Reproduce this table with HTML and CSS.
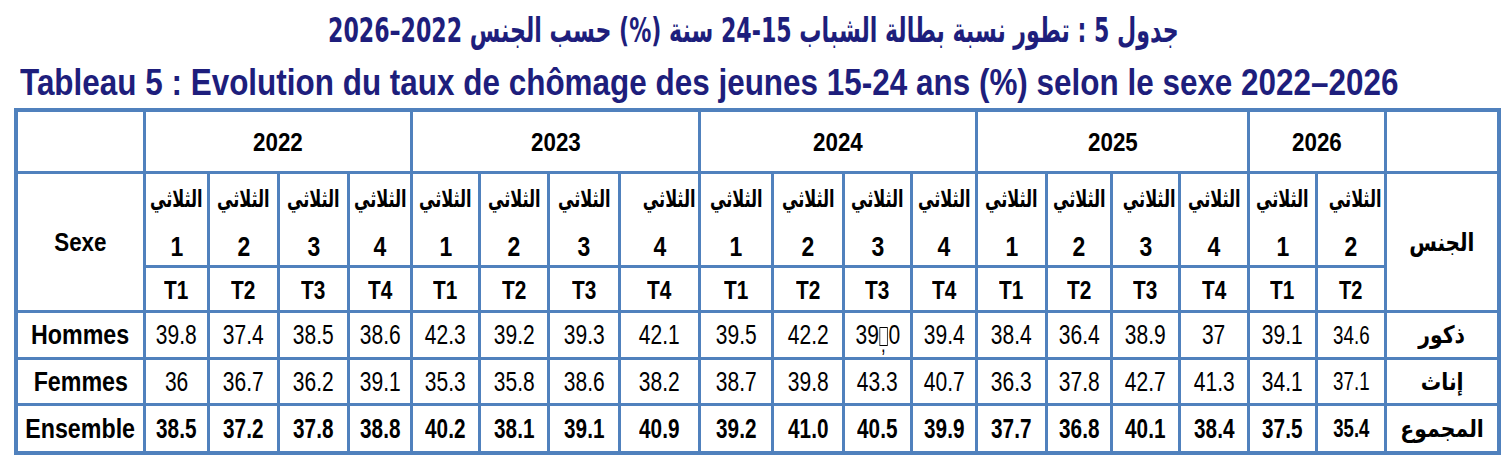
FILE: index.html
```html
<!DOCTYPE html>
<html lang="fr">
<head>
<meta charset="utf-8">
<title>Tableau 5</title>
<link rel="stylesheet" href="styles.css">
</head>
<body>
<div class="page">
  <div class="title-ar"><h1 class="x" dir="rtl" lang="ar">جدول 5 : تطور نسبة بطالة الشباب 15-24 سنة (%) حسب الجنس 2022–2026</h1></div>
  <div class="title-fr"><h2 class="x">Tableau 5 : Evolution du taux de chômage des jeunes 15-24 ans (%) selon le sexe 2022–2026</h2></div>
  <div class="grid">
    <div class="c"></div>
    <div class="c y s4"><span class="x">2022</span></div>
    <div class="c y s4"><span class="x">2023</span></div>
    <div class="c y s4"><span class="x">2024</span></div>
    <div class="c y s4"><span class="x">2025</span></div>
    <div class="c y s2"><span class="x">2026</span></div>
    <div class="c"></div>

    <div class="c sexe r2"><span class="x">Sexe</span></div>
    <div class="c q"><span class="ar"><span class="x">الثلاثي</span></span><span class="num"><span class="x">1</span></span></div>
    <div class="c q"><span class="ar"><span class="x">الثلاثي</span></span><span class="num"><span class="x">2</span></span></div>
    <div class="c q"><span class="ar"><span class="x">الثلاثي</span></span><span class="num"><span class="x">3</span></span></div>
    <div class="c q"><span class="ar"><span class="x">الثلاثي</span></span><span class="num"><span class="x">4</span></span></div>
    <div class="c q"><span class="ar"><span class="x">الثلاثي</span></span><span class="num"><span class="x">1</span></span></div>
    <div class="c q"><span class="ar"><span class="x">الثلاثي</span></span><span class="num"><span class="x">2</span></span></div>
    <div class="c q"><span class="ar"><span class="x">الثلاثي</span></span><span class="num"><span class="x">3</span></span></div>
    <div class="c q"><span class="ar right"><span class="x">الثلاثي</span></span><span class="num"><span class="x">4</span></span></div>
    <div class="c q"><span class="ar"><span class="x">الثلاثي</span></span><span class="num"><span class="x">1</span></span></div>
    <div class="c q"><span class="ar"><span class="x">الثلاثي</span></span><span class="num"><span class="x">2</span></span></div>
    <div class="c q"><span class="ar"><span class="x">الثلاثي</span></span><span class="num"><span class="x">3</span></span></div>
    <div class="c q"><span class="ar"><span class="x">الثلاثي</span></span><span class="num"><span class="x">4</span></span></div>
    <div class="c q"><span class="ar"><span class="x">الثلاثي</span></span><span class="num"><span class="x">1</span></span></div>
    <div class="c q"><span class="ar"><span class="x">الثلاثي</span></span><span class="num"><span class="x">2</span></span></div>
    <div class="c q"><span class="ar right"><span class="x">الثلاثي</span></span><span class="num"><span class="x">3</span></span></div>
    <div class="c q"><span class="ar"><span class="x">الثلاثي</span></span><span class="num"><span class="x">4</span></span></div>
    <div class="c q"><span class="ar"><span class="x">الثلاثي</span></span><span class="num"><span class="x">1</span></span></div>
    <div class="c q"><span class="ar right"><span class="x">الثلاثي</span></span><span class="num"><span class="x">2</span></span></div>
    <div class="c jins r2" lang="ar"><span class="x">الجنس</span></div>

    <div class="c t"><span class="x">T1</span></div><div class="c t"><span class="x">T2</span></div><div class="c t"><span class="x">T3</span></div><div class="c t"><span class="x">T4</span></div>
    <div class="c t"><span class="x">T1</span></div><div class="c t"><span class="x">T2</span></div><div class="c t"><span class="x">T3</span></div><div class="c t"><span class="x">T4</span></div>
    <div class="c t"><span class="x">T1</span></div><div class="c t"><span class="x">T2</span></div><div class="c t"><span class="x">T3</span></div><div class="c t"><span class="x">T4</span></div>
    <div class="c t"><span class="x">T1</span></div><div class="c t"><span class="x">T2</span></div><div class="c t"><span class="x">T3</span></div><div class="c t"><span class="x">T4</span></div>
    <div class="c t"><span class="x">T1</span></div><div class="c t sm"><span class="x">T2</span></div>

    <div class="c lab"><span class="x">Hommes</span></div>
    <div class="c n"><span class="x">39.8</span></div><div class="c n"><span class="x">37.4</span></div><div class="c n"><span class="x">38.5</span></div><div class="c n"><span class="x">38.6</span></div>
    <div class="c n"><span class="x">42.3</span></div><div class="c n"><span class="x">39.2</span></div><div class="c n"><span class="x">39.3</span></div><div class="c n"><span class="x">42.1</span></div>
    <div class="c n"><span class="x">39.5</span></div><div class="c n"><span class="x">42.2</span></div><div class="c n"><span class="x">39<span class="tofu"></span>0</span></div><div class="c n"><span class="x">39.4</span></div>
    <div class="c n"><span class="x">38.4</span></div><div class="c n"><span class="x">36.4</span></div><div class="c n"><span class="x">38.9</span></div><div class="c n"><span class="x">37</span></div>
    <div class="c n"><span class="x">39.1</span></div><div class="c n sm"><span class="x">34.6</span></div>
    <div class="c arow" lang="ar"><span class="x">ذكور</span></div>

    <div class="c lab"><span class="x">Femmes</span></div>
    <div class="c n"><span class="x">36</span></div><div class="c n"><span class="x">36.7</span></div><div class="c n"><span class="x">36.2</span></div><div class="c n"><span class="x">39.1</span></div>
    <div class="c n"><span class="x">35.3</span></div><div class="c n"><span class="x">35.8</span></div><div class="c n"><span class="x">38.6</span></div><div class="c n"><span class="x">38.2</span></div>
    <div class="c n"><span class="x">38.7</span></div><div class="c n"><span class="x">39.8</span></div><div class="c n"><span class="x">43.3</span></div><div class="c n"><span class="x">40.7</span></div>
    <div class="c n"><span class="x">36.3</span></div><div class="c n"><span class="x">37.8</span></div><div class="c n"><span class="x">42.7</span></div><div class="c n"><span class="x">41.3</span></div>
    <div class="c n"><span class="x">34.1</span></div><div class="c n sm"><span class="x">37.1</span></div>
    <div class="c arow" lang="ar"><span class="x">إناث</span></div>

    <div class="c lab"><span class="x">Ensemble</span></div>
    <div class="c n b"><span class="x">38.5</span></div><div class="c n b"><span class="x">37.2</span></div><div class="c n b"><span class="x">37.8</span></div><div class="c n b"><span class="x">38.8</span></div>
    <div class="c n b"><span class="x">40.2</span></div><div class="c n b"><span class="x">38.1</span></div><div class="c n b"><span class="x">39.1</span></div><div class="c n b"><span class="x">40.9</span></div>
    <div class="c n b"><span class="x">39.2</span></div><div class="c n b"><span class="x">41.0</span></div><div class="c n b"><span class="x">40.5</span></div><div class="c n b"><span class="x">39.9</span></div>
    <div class="c n b"><span class="x">37.7</span></div><div class="c n b"><span class="x">36.8</span></div><div class="c n b"><span class="x">40.1</span></div><div class="c n b"><span class="x">38.4</span></div>
    <div class="c n b"><span class="x">37.5</span></div><div class="c n b sm"><span class="x">35.4</span></div>
    <div class="c arow" lang="ar"><span class="x">المجموع</span></div>
  </div>
</div>
</body>
</html>
```

FILE: styles.css
```css
* { box-sizing: border-box; }
html, body { margin: 0; padding: 0; background: #ffffff; }
body {
  font-family: "Liberation Sans", "DejaVu Sans", sans-serif;
  color: #000;
}
.page { width: 1507px; height: 463px; overflow: hidden; }
.x {
  display: inline-block;
  flex: none;
  white-space: nowrap;
  transform: scaleX(var(--sx, 0.82));
}
.title-ar {
  height: 56px;
  padding-top: 7px;
  text-align: center;
  --sx: 0.65;
}
.title-ar h1 {
  margin: 0;
  font-family: "DejaVu Sans", sans-serif;
  font-size: 34px;
  line-height: 46px;
  font-weight: bold;
  color: #1e1e7c;
}
.title-fr {
  height: 52px;
  padding-left: 20px;
}
.title-fr h2 {
  margin: 0;
  font-size: 37px;
  line-height: 54px;
  font-weight: bold;
  color: #1e1e7c;
  transform-origin: left center;
  --sx: 0.85;
}
.grid {
  margin-left: 14px;
  width: 1487px;
  display: grid;
  grid-template-columns: 125px 61px 67px 67px 60px 65px 66px 68px 77px 70px 68px 65px 62px 67px 62px 65px 66px 65px 66px 110px;
  grid-template-rows: 59px 91px 42px 44px 43px 45px;
  gap: 3px;
  border: 4px solid #5081bd;
  background: #5081bd;
}
.c {
  background: #fff;
  display: flex;
  align-items: center;
  justify-content: center;
  white-space: nowrap;
  overflow: visible;
}
.y { font-size: 26px; font-weight: bold; --sx: 0.86; padding-top: 2px; }
.s4 { grid-column: span 4; }
.s2 { grid-column: span 2; }
.r2 { grid-row: span 2; }
.sexe { font-size: 26px; font-weight: bold; --sx: 0.86; }
.jins { font-family: "DejaVu Sans", sans-serif; font-size: 25px; font-weight: bold; --sx: 0.8; }
.q {
  flex-direction: column;
  align-items: stretch;
  justify-content: flex-start;
}
.q > span { display: flex; justify-content: center; }
.q .ar {
  font-family: "DejaVu Sans", sans-serif;
  font-size: 24px;
  font-weight: bold;
  height: 58px;
  line-height: 50px;
  --sx: 0.67;
}
.q .right { justify-content: flex-end; padding-right: 0; }
.q .right .x { transform-origin: 92% center; }
.q .num {
  font-size: 28px;
  font-weight: bold;
  line-height: 30px;
  --sx: 0.82;
}
.t { font-size: 26px; font-weight: bold; --sx: 0.8; padding-top: 2px; }
.lab { font-size: 28px; font-weight: bold; --sx: 0.83; }
.n { font-size: 28px; font-weight: normal; --sx: 0.75; }
.b { font-weight: bold; --sx: 0.74; }
.sm { font-size: 25px; }
.arow { font-family: "DejaVu Sans", sans-serif; font-size: 24px; font-weight: bold; --sx: 0.85; }
.tofu {
  display: inline-block;
  width: 11px;
  height: 19px;
  border: 1px solid #000;
  margin: 0 1px;
  vertical-align: -2px;
  position: relative;
}
.tofu::after {
  content: ",";
  position: absolute;
  left: 1px;
  top: 6px;
  font-size: 22px;
  line-height: 1;
}
```
